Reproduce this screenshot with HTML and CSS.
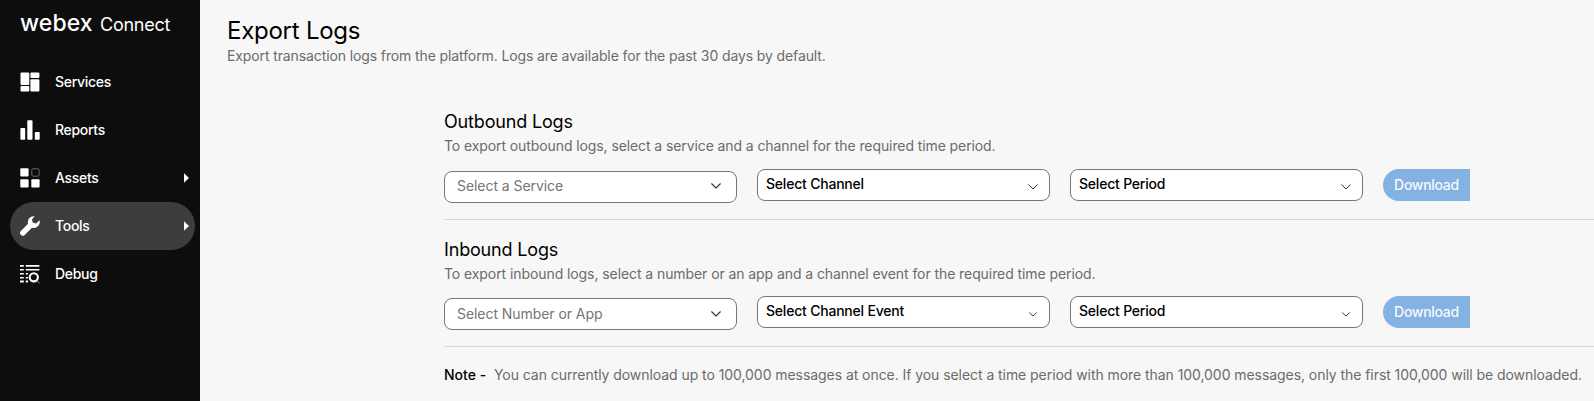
FILE: index.html
```html
<!DOCTYPE html>
<html lang="en">
<head>
<meta charset="utf-8">
<title>Export Logs</title>
<link rel="stylesheet" href="styles.css">
</head>
<body>
<div class="app">
  <aside class="sidebar">
    <div class="brand"><span class="brand-name">webex</span><span class="brand-product">Connect</span></div>
    <nav class="nav">
      <a class="nav-item">
        <svg class="nav-icon" viewBox="0 0 20 20"><rect x="0.5" y="0.5" width="8.8" height="12.4" rx="1"/><rect x="10.4" y="0.5" width="9" height="5.6" rx="1"/><rect x="0.5" y="14" width="8.8" height="5.6" rx="1"/><rect x="10.4" y="7.2" width="9" height="12.4" rx="1"/></svg>
        <span class="nav-label">Services</span>
      </a>
      <a class="nav-item">
        <svg class="nav-icon" viewBox="0 0 20 20"><rect x="0.4" y="8" width="4.8" height="11.7" rx="0.8"/><rect x="7.3" y="0.3" width="5.2" height="19.4" rx="0.8"/><rect x="14.8" y="12" width="4.9" height="7.7" rx="0.8"/></svg>
        <span class="nav-label">Reports</span>
      </a>
      <a class="nav-item">
        <svg class="nav-icon" viewBox="0 0 20 20"><rect x="0.3" y="0.3" width="8.3" height="8.3" rx="1"/><rect x="11.8" y="0.8" width="7.4" height="7.4" rx="1.4" fill="none" stroke="#6a6a6a"/><rect x="0.3" y="11.3" width="8.3" height="8.3" rx="1"/><rect x="11.3" y="11.3" width="8.3" height="8.3" rx="1"/></svg>
        <span class="nav-label">Assets</span>
        <svg class="nav-arrow" viewBox="0 0 5 10"><path d="M0 0.2 L5 5 L0 9.8Z"/></svg>
      </a>
      <a class="nav-item active">
        <svg class="nav-icon" viewBox="0 0 20 20"><path d="M14.6 0.3 A6 6 0 0 0 8 7.8 L0.9 14.9 A2.6 2.6 0 0 0 4.7 18.9 L12 11.8 A6 6 0 0 0 19.5 4.3 L15.9 7.4 L12.6 6.5 L12 3.5 Z"/></svg>
        <span class="nav-label">Tools</span>
        <svg class="nav-arrow" viewBox="0 0 5 10"><path d="M0 0.2 L5 5 L0 9.8Z"/></svg>
      </a>
      <a class="nav-item">
        <svg class="nav-icon" viewBox="0 0 20 20"><path d="M0 1h3.8v1.8H0zM5.8 1h13.6v1.8H5.8zM0 5h3.8v1.6H0zM5.8 5h13.6v1.6H5.8zM0 9h3.8v1.6H0zM5.8 9h2.2v1.6H5.8zM0 12.9h3.8v1.6H0zM5.8 12.9h2.2v1.6H5.8zM0 16.6h3.8v1.8H0zM5.8 16.6h2.2v1.8H5.8z"/><circle cx="13.8" cy="13.3" r="4.1" fill="none" stroke="#fff" stroke-width="2.1"/><path d="M16.7 16.3 L19.5 19.4" stroke="#999"/></svg>
        <span class="nav-label">Debug</span>
      </a>
    </nav>
  </aside>
  <main class="content">
    <header class="page-head">
      <h1 class="page-title">Export Logs</h1>
      <p class="page-sub">Export transaction logs from the platform. Logs are available for the past 30 days by default.</p>
    </header>
    <div class="panels">
      <section class="panel outbound">
        <h2 class="panel-title">Outbound Logs</h2>
        <p class="panel-desc">To export outbound logs, select a service and a channel for the required time period.</p>
        <div class="controls">
          <div class="select combo"><span>Select a Service</span><svg class="chevron" viewBox="0 0 10 6"><path d="M0.4 0.5 L5 5 L9.6 0.5"/></svg></div>
          <div class="select"><span>Select Channel</span><svg class="chevron" viewBox="0 0 10 6"><path d="M0.4 0.5 L5 5 L9.6 0.5"/></svg></div>
          <div class="select"><span>Select Period</span><svg class="chevron" viewBox="0 0 10 6"><path d="M0.4 0.5 L5 5 L9.6 0.5"/></svg></div>
          <button class="download">Download</button>
        </div>
      </section>
      <section class="panel inbound">
        <h2 class="panel-title">Inbound Logs</h2>
        <p class="panel-desc">To export inbound logs, select a number or an app and a channel event for the required time period.</p>
        <div class="controls">
          <div class="select combo"><span>Select Number or App</span><svg class="chevron" viewBox="0 0 10 6"><path d="M0.4 0.5 L5 5 L9.6 0.5"/></svg></div>
          <div class="select"><span>Select Channel Event</span><svg class="chevron small" viewBox="0 0 10 6"><path d="M0.4 0.5 L5 5 L9.6 0.5"/></svg></div>
          <div class="select"><span>Select Period</span><svg class="chevron small" viewBox="0 0 10 6"><path d="M0.4 0.5 L5 5 L9.6 0.5"/></svg></div>
          <button class="download">Download</button>
        </div>
      </section>
      <p class="note"><span class="note-label">Note -</span><span class="note-text">You can currently download up to 100,000 messages at once. If you select a time period with more than 100,000 messages, only the first 100,000 will be downloaded.</span></p>
    </div>
  </main>
</div>
</body>
</html>
```
FILE: styles.css
```css
* { box-sizing: border-box; }
body { margin: 0; font-family: Inter, "Liberation Sans", sans-serif; font-size: 14px; background: #f7f7f7; color: #000; overflow: hidden; }
h1, h2, p { margin: 0; font-weight: 400; white-space: nowrap; }
.app { display: flex; height: 401px; }
.sidebar { width: 200px; flex: none; background: #0d0d0d; color: #fff; }
.brand { display: flex; height: 58px; padding: 9px 0 0 20px; line-height: 28px; }
.brand-name { width: 80px; font-size: 23px; font-weight: 500; letter-spacing: 0.1px; }
.brand-product { padding-top: 2px; font-size: 18px; letter-spacing: -0.25px; }
.nav-item { display: flex; align-items: center; height: 48px; margin: 0 5px 0 10px; padding: 0 6px 0 10px; border-radius: 24px; }
.nav-item.active { background: #3d3d3d; }
.nav-icon { width: 20px; height: 20px; fill: #fff; flex: none; }
.nav-label { margin-left: 15px; flex: 1; line-height: 20px; font-weight: 500; letter-spacing: -0.3px; }
.nav-arrow { width: 5px; height: 10px; fill: #fff; }
.content { flex: 1; min-width: 0; }
.page-head { padding: 16px 0 0 27px; height: 109px; }
.page-title { font-size: 24px; line-height: 29px; letter-spacing: -0.25px; }
.page-sub { padding-top: 1px; line-height: 20px; color: #6b6b6b; letter-spacing: -0.113px; }
.panels { margin-left: 244px; }
.panel { border-bottom: 1px solid #d9d9d9; height: 111px; }
.inbound { height: 127px; padding-top: 17px; }
.panel-title { font-size: 18px; line-height: 26px; letter-spacing: -0.17px; }
.panel-desc { line-height: 22px; color: #6b6b6b; letter-spacing: -0.095px; }
.inbound .panel-desc { letter-spacing: -0.08px; }
.controls { display: flex; gap: 20px; margin-top: 12px; }
.inbound .controls { margin-top: 11px; }
.select { display: flex; justify-content: space-between; align-items: center; width: 293px; height: 32px; padding: 0 11px 2px 8px; border: 1px solid #777; border-radius: 8px; background: #fff; line-height: 20px; font-weight: 500; letter-spacing: -0.21px; }
.combo { margin-top: 2px; padding: 0 15px 2px 12px; color: #757575; font-weight: 400; letter-spacing: -0.06px; }
.inbound .combo { padding-bottom: 0; }
.chevron { width: 10px; height: 6px; fill: none; stroke: #333; stroke-width: 1; position: relative; top: 3px; }
.chevron.small { width: 8px; height: 5px; margin-right: 1px; stroke-width: 1.2; }
.combo .chevron { top: 0; stroke-width: 1.2; }
.download { width: 87px; height: 32px; padding: 0 0 1px; border: 0; border-radius: 16px 0 0 16px; background: #84b2e3; color: #f5f9fd; font: 500 14px/20px Inter, sans-serif; letter-spacing: -0.28px; }
.note { display: flex; padding-top: 17px; line-height: 22px; color: #6b6b6b; }
.note-label { width: 50px; color: #000; font-weight: 500; }
.note-text { letter-spacing: -0.06px; }
```
